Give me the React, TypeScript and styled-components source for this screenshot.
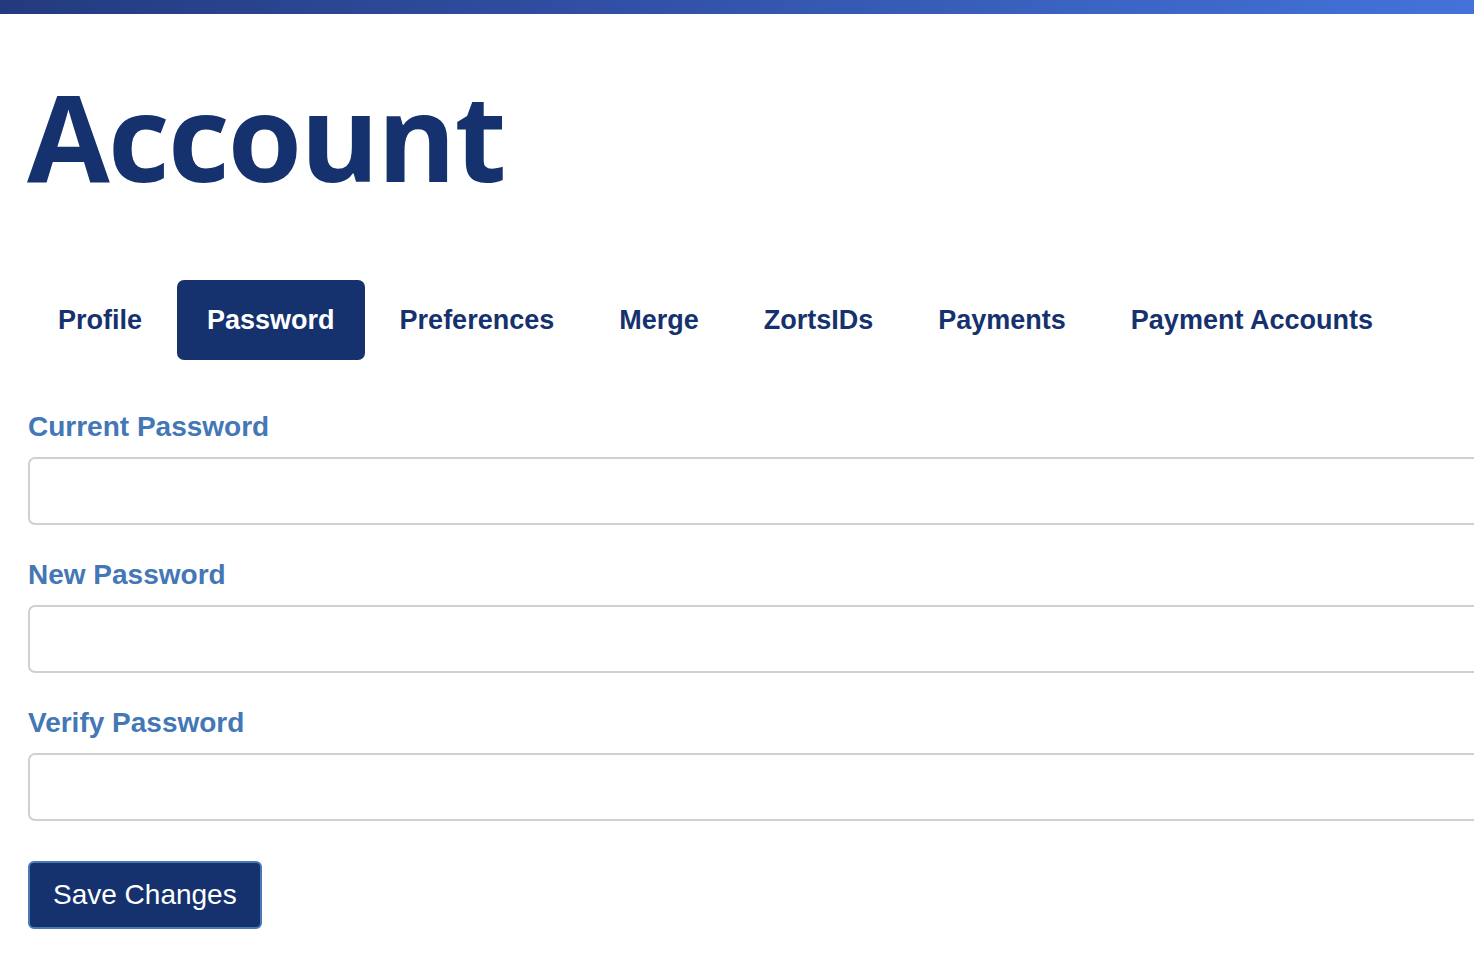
import React from "react";
import styled, { createGlobalStyle } from "styled-components";

const Global = createGlobalStyle`
  html, body { margin: 0; padding: 0; background: #ffffff; }
  body { font-family: "Liberation Sans", Arial, sans-serif; overflow: hidden; }
  * { box-sizing: border-box; }
`;

const TopBar = styled.div`
  height: 14px;
  background: linear-gradient(90deg, #233a7e 0%, #3252a8 45%, #4373da 100%);
`;

const Page = styled.main`
  padding: 0 0 0 28px;
  width: 1520px;
`;

const Title = styled.h1`
  margin: 0;
  padding-top: 52px;
  font-family: "Open Sans", sans-serif;
  font-weight: 700;
  font-size: 120px;
  line-height: 140px;
  color: #15326e;
  letter-spacing: -1.8px;
  margin-left: -1px;
`;

const Tabs = styled.nav`
  display: flex;
  gap: 5px;
  margin-top: 74px;
  height: 80px;
`;

const Tab = styled.button<{ $active?: boolean }>`
  border: none;
  border-radius: 7px;
  padding: 0 30px;
  height: 80px;
  font-family: "Liberation Sans", Arial, sans-serif;
  font-weight: 700;
  font-size: 27px;
  cursor: pointer;
  background: ${(p) => (p.$active ? "#15326e" : "transparent")};
  color: ${(p) => (p.$active ? "#ffffff" : "#15326e")};
`;

const Form = styled.form`
  display: flex;
  flex-direction: column;
  margin-top: 51px;
`;

const Field = styled.div`
  display: flex;
  flex-direction: column;
  margin-bottom: 34px;
`;

const Label = styled.label`
  font-weight: 700;
  font-size: 28px;
  line-height: 32px;
  color: #4477b5;
  margin-bottom: 14px;
`;

const Input = styled.input`
  height: 68px;
  width: 1500px;
  border: 2px solid #d0d0d0;
  border-radius: 7px;
  background: #fff;
  font-size: 24px;
  padding: 0 16px;
`;

const SaveButton = styled.button`
  align-self: flex-start;
  margin-top: 6px;
  height: 68px;
  padding: 0 23px;
  border: 2px solid #4a79b8;
  border-radius: 6px;
  background: #15326e;
  color: #ffffff;
  font-family: "Liberation Sans", Arial, sans-serif;
  font-size: 28px;
  cursor: pointer;
`;

const tabs = [
  "Profile",
  "Password",
  "Preferences",
  "Merge",
  "ZortsIDs",
  "Payments",
  "Payment Accounts",
];

const fields = ["Current Password", "New Password", "Verify Password"];

export default function App() {
  return (
    <>
      <Global />
      <TopBar />
      <Page>
        <Title>Account</Title>
        <Tabs>
          {tabs.map((t) => (
            <Tab key={t} $active={t === "Password"}>
              {t}
            </Tab>
          ))}
        </Tabs>
        <Form onSubmit={(e) => e.preventDefault()}>
          {fields.map((f) => (
            <Field key={f}>
              <Label>{f}</Label>
              <Input type="password" />
            </Field>
          ))}
          <SaveButton type="submit">Save Changes</SaveButton>
        </Form>
      </Page>
    </>
  );
}
